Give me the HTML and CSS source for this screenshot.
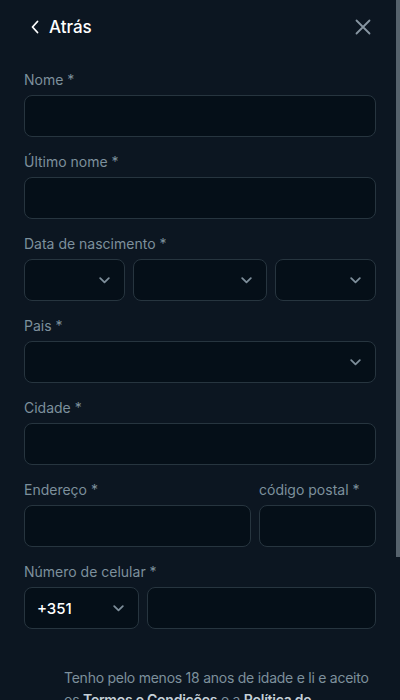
FILE: index.html
```html
<!DOCTYPE html>
<html lang="pt">
<head>
<meta charset="utf-8">
<title>Registo</title>
<link rel="stylesheet" href="styles.css">
</head>
<body>
<div class="page">
  <header class="topbar">
    <button class="back" type="button">
      <svg width="10" height="14" viewBox="0 0 10 14" fill="none"><path d="M7.5 1.5 L2.5 7 L7.5 12.5" stroke="#ffffff" stroke-width="1.8" stroke-linecap="round" stroke-linejoin="round"/></svg>
      <span>Atrás</span>
    </button>
    <button class="close" type="button" aria-label="Fechar">
      <svg width="16" height="16" viewBox="0 0 16 16" fill="none"><path d="M1.5 1.5 L14.5 14.5 M14.5 1.5 L1.5 14.5" stroke="#8796a2" stroke-width="1.8" stroke-linecap="round"/></svg>
    </button>
  </header>

  <form class="form">
    <div class="field">
      <label class="label">Nome *</label>
      <div class="input"></div>
    </div>
    <div class="field">
      <label class="label">Último nome *</label>
      <div class="input"></div>
    </div>
    <div class="field">
      <label class="label">Data de nascimento *</label>
      <div class="row dob">
        <div class="input select"><svg class="chev" width="11" height="7" viewBox="0 0 11 7" fill="none"><path d="M1.2 1.2 L5.5 5.3 L9.8 1.2" stroke="#7e8e9a" stroke-width="1.8" stroke-linecap="round" stroke-linejoin="round"/></svg></div>
        <div class="input select"><svg class="chev" width="11" height="7" viewBox="0 0 11 7" fill="none"><path d="M1.2 1.2 L5.5 5.3 L9.8 1.2" stroke="#7e8e9a" stroke-width="1.8" stroke-linecap="round" stroke-linejoin="round"/></svg></div>
        <div class="input select"><svg class="chev" width="11" height="7" viewBox="0 0 11 7" fill="none"><path d="M1.2 1.2 L5.5 5.3 L9.8 1.2" stroke="#7e8e9a" stroke-width="1.8" stroke-linecap="round" stroke-linejoin="round"/></svg></div>
      </div>
    </div>
    <div class="field">
      <label class="label">Pais *</label>
      <div class="input select"><svg class="chev" width="11" height="7" viewBox="0 0 11 7" fill="none"><path d="M1.2 1.2 L5.5 5.3 L9.8 1.2" stroke="#7e8e9a" stroke-width="1.8" stroke-linecap="round" stroke-linejoin="round"/></svg></div>
    </div>
    <div class="field">
      <label class="label">Cidade *</label>
      <div class="input"></div>
    </div>
    <div class="row address">
      <div class="field">
        <label class="label">Endereço *</label>
        <div class="input"></div>
      </div>
      <div class="field">
        <label class="label">código postal *</label>
        <div class="input"></div>
      </div>
    </div>
    <div class="field">
      <label class="label">Número de celular *</label>
      <div class="row phone">
        <div class="input select code"><span class="code-text">+351</span><svg class="chev" width="11" height="7" viewBox="0 0 11 7" fill="none"><path d="M1.2 1.2 L5.5 5.3 L9.8 1.2" stroke="#7e8e9a" stroke-width="1.8" stroke-linecap="round" stroke-linejoin="round"/></svg></div>
        <div class="input"></div>
      </div>
    </div>

    <p class="terms">Tenho pelo menos 18 anos de idade e li e aceito os <b>Termos e Condições</b> e a <b>Política de Privacidade</b>.</p>

    <button class="submit" type="button">Registrar</button>
  </form>
</div>
<div class="scroll-thumb"></div>
</body>
</html>
```

FILE: styles.css
```css
* { box-sizing: border-box; }
html, body {
  margin: 0;
  padding: 0;
  height: 100%;
  background: #0c1621;
}
body {
  font-family: "Inter", "Noto Sans", sans-serif;
  color: #7d909c;
  overflow: hidden;
  position: relative;
}
.page {
  height: 100vh;
  overflow-y: auto;
  background: #0c1621;
  scrollbar-width: none;
}
.page::-webkit-scrollbar { width: 0; height: 0; }

/* decorative scrollbar indicator that sits over the right edge */
.scroll-thumb {
  position: fixed;
  top: 0;
  right: 0;
  width: 4px;
  height: 557px;
  background: #56626c;
}

.topbar {
  height: 53px;
  padding: 0 29px 0 30px;
  display: flex;
  align-items: center;
  justify-content: space-between;
}
.back, .close {
  background: none;
  border: 0;
  padding: 0;
  display: flex;
  align-items: center;
  cursor: pointer;
}
.back { gap: 9px; color: #ffffff; font-family: inherit; font-size: 17px; font-weight: 500; }
.back svg { margin-top: 1px; }

.form {
  padding: 18px 24px 90px;
  display: flex;
  flex-direction: column;
  gap: 16px;
}
.field { display: flex; flex-direction: column; gap: 6px; min-width: 0; }
.label {
  font-size: 14px;
  line-height: 18px;
  color: #7d909c;
}
.input {
  height: 42px;
  border: 1px solid #27353f;
  border-radius: 8px;
  background: #050f18;
}
.select {
  display: flex;
  align-items: center;
  justify-content: flex-end;
  padding: 0 14px;
}
.chev { flex: none; }
.row { display: flex; gap: 8px; }
.dob .select:nth-child(1) { width: 101px; flex: none; }
.dob .select:nth-child(2) { flex: 1; }
.dob .select:nth-child(3) { width: 101px; flex: none; }
.address .field:first-child { flex: 1; }
.address .field:last-child { width: 117px; flex: none; }
.phone .code { width: 115px; flex: none; justify-content: space-between; padding: 0 14px 0 12px; }
.phone .input:last-child { flex: 1; }
.code-text { color: #ffffff; font-size: 15px; font-weight: 500; }

.terms {
  margin: 22px 0 0;
  padding-left: 40px;
  font-size: 14px;
  line-height: 22px;
  letter-spacing: -0.25px;
  color: #7d909c;
}
.terms b { color: #c5d0d8; font-weight: 600; }

.submit {
  margin-top: 10px;
  height: 48px;
  border: 0;
  border-radius: 8px;
  background: #1d2a35;
  color: #7d909c;
  font-family: inherit;
  font-size: 15px;
  font-weight: 600;
}
```
